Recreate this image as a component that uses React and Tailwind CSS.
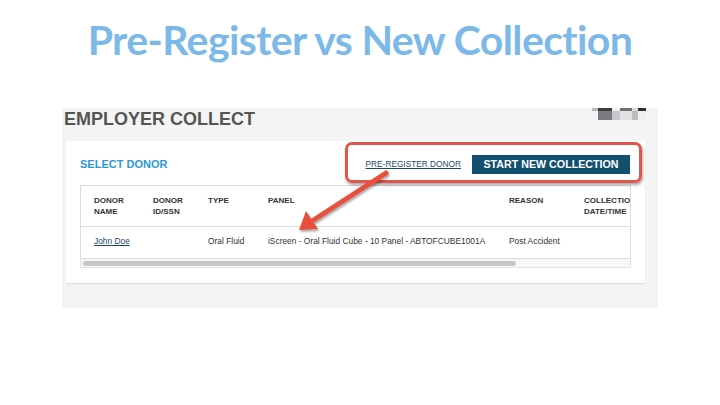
export default function App() {
  const cols = 'grid grid-cols-[59px_55px_60px_241px_75px_60px] pl-[13px]';

  return (
    <div className="relative w-[720px] h-[405px] bg-white overflow-hidden">
      {/* slide title */}
      <div className="pt-[16px] h-[108px] text-center">
        <h1 className="font-['Lato',sans-serif] font-bold text-[41px] leading-[48px] tracking-[-0.6px] text-[#7cb9e8]">
          Pre-Register vs New Collection
        </h1>
      </div>

      {/* screenshot panel */}
      <div className="ml-[62px] w-[596px] h-[200px] bg-[#f4f4f4] font-['Liberation_Sans',Arial,sans-serif]">
        <div className="flex items-start justify-between">
          <div className="pl-[2px] pt-[1px] text-[18px] leading-[20px] font-bold text-[#555555]">EMPLOYER COLLECT</div>
          <div className="flex mr-[12px]">
            <div className="flex flex-col">
              <div className="flex">
                <div className="w-[6px] h-[3px] bg-[#b9b9bb]" />
                <div className="w-[14px] h-[3px] bg-[#3a3a3f]" />
                <div className="w-[8px] h-[3px] bg-[#ededed]" />
                <div className="w-[12px] h-[3px] bg-[#707075]" />
                <div className="w-[6px] h-[3px] bg-[#d8d8d8]" />
                <div className="w-[8px] h-[3px] bg-[#2f2f33]" />
              </div>
              <div className="flex">
                <div className="w-[6px] h-[9px] bg-[#f4f4f4]" />
                <div className="w-[14px] h-[9px] bg-[#7a7a80]" />
                <div className="w-[8px] h-[9px] bg-[#c8c8ca]" />
                <div className="w-[12px] h-[9px] bg-[#e2e2e2]" />
                <div className="w-[6px] h-[9px] bg-[#bcbcbe]" />
                <div className="w-[8px] h-[9px] bg-[#f0f0f0]" />
              </div>
            </div>
          </div>
        </div>

        <div className="mt-[12px] ml-[4px] w-[579px] h-[142px] bg-white shadow-[0_1px_1px_rgba(0,0,0,0.08)]">
          <div className="flex items-center justify-between h-[44px] pt-[2px] pl-[14px] pr-[15px]">
            <div className="text-[11px] font-bold text-[#2b9ad4]">SELECT DONOR</div>
            <div className="flex items-center gap-[11px]">
              <a className="text-[8.3px] text-[#1e4a6a] underline">PRE-REGISTER DONOR</a>
              <button className="w-[158px] h-[19px] bg-[#134f6f] text-white text-[10.7px] font-bold">
                START NEW COLLECTION
              </button>
            </div>
          </div>

          <div className="ml-[14px] w-[551px] border border-[#dcdcdc] overflow-hidden">
            <div className={`${cols} h-[41px] pt-[9px] text-[8px] leading-[11px] font-bold text-[#333333] border-b border-[#dedede] whitespace-nowrap`}>
              <div>DONOR<br />NAME</div>
              <div>DONOR<br />ID/SSN</div>
              <div>TYPE</div>
              <div>PANEL</div>
              <div>REASON</div>
              <div>COLLECTION<br />DATE/TIME</div>
            </div>
            <div className={`${cols} h-[31px] pb-[2px] items-center text-[8.4px] text-[#333333] whitespace-nowrap`}>
              <a className="text-[#1e4a6a] underline">John Doe</a>
              <div />
              <div>Oral Fluid</div>
              <div>iScreen - Oral Fluid Cube - 10 Panel - ABTOFCUBE1001A</div>
              <div>Post Accident</div>
              <div />
            </div>
          </div>
          <div className="ml-[14px] w-[551px] h-[9px] border-x border-b border-[#e4e4e4] bg-[#f7f7f7] flex items-center pl-[2px]">
            <div className="w-[433px] h-[5px] rounded-full bg-[#c6c6c6]" />
          </div>
        </div>
      </div>

      {/* callout overlay */}
      <div className="absolute left-[345px] top-[142px] w-[297px] h-[41px] border-[3px] border-[#e2554c] rounded-[7px] shadow-[1px_2px_3px_rgba(0,0,0,0.35)]" />
      <svg className="absolute left-0 top-0" width="720" height="405" viewBox="0 0 720 405">
        <defs>
          <filter id="sh" x="-20%" y="-20%" width="140%" height="140%">
            <feDropShadow dx="1" dy="2" stdDeviation="1.2" floodColor="#000" floodOpacity="0.35" />
          </filter>
        </defs>
        <g filter="url(#sh)" fill="#e8503e">
          <line x1="386" y1="173" x2="312" y2="221" stroke="#e8503e" strokeWidth="5" strokeLinecap="round" />
          <polygon points="299,230 306,211 318,229" />
        </g>
      </svg>
    </div>
  );
}
